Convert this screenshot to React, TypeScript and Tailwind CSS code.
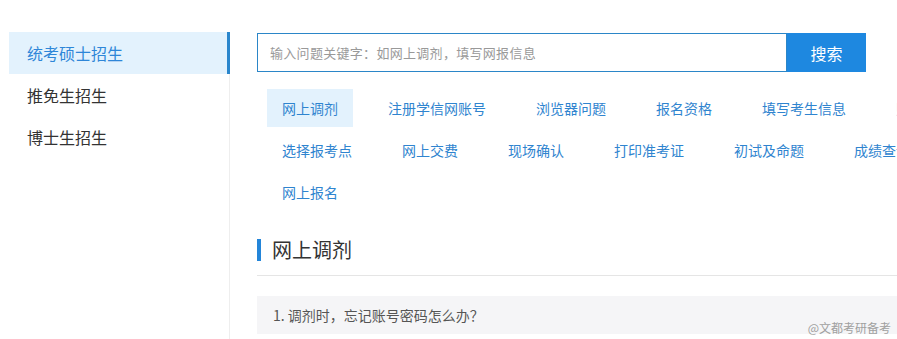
const side = ["统考硕士招生", "推免生招生", "博士生招生"];

const tags = [
  "网上调剂",
  "注册学信网账号",
  "浏览器问题",
  "报名资格",
  "填写考生信息",
  "照片采集",
  "选择报考点",
  "网上交费",
  "现场确认",
  "打印准考证",
  "初试及命题",
  "成绩查询",
  "网上报名",
];

export default function App() {
  return (
    <div
      className="relative h-[339px] w-full overflow-hidden bg-white"
      style={{ fontFamily: '"Noto Sans CJK SC", "Noto Sans", sans-serif' }}
    >
      <div className="flex pl-[9px] pt-[32px]">
        {/* sidebar */}
        <div className="h-[400px] w-[221px] shrink-0 border-r border-[#eeeeee]">
          {side.map((s, i) => (
            <div
              key={s}
              className={
                i === 0
                  ? "-mr-px flex h-[42px] items-center border-r-[3px] border-[#2a86cc] bg-[#e3f2fd] pl-[18px] text-[16px] text-[#2e86d8]"
                  : "flex h-[42px] items-center pl-[18px] text-[16px] text-[#333333]"
              }
            >
              {s}
            </div>
          ))}
        </div>

        {/* content */}
        <div className="ml-[27px] w-[740px] shrink-0">
          <div className="flex h-[40px] w-[609px] pt-px">
            <div className="flex flex-1 items-center border border-[#2b86c8] pl-[12px] text-[13px] tracking-[0.3px] text-[#999999]">
              输入问题关键字：如网上调剂，填写网报信息
            </div>
            <button className="w-[79px] bg-[#1e88e0] text-[16px] text-white">搜索</button>
          </div>

          <div className="mt-[17px] flex flex-wrap pl-[10px]">
            {tags.map((t, i) => (
              <span
                key={t}
                className={
                  i === 0
                    ? "mb-[4px] mr-[20px] h-[38px] bg-[#e3f2fd] px-[15px] text-[14px] leading-[38px] text-[#2f84cf]"
                    : "mb-[4px] mr-[20px] h-[38px] px-[15px] text-[14px] leading-[38px] text-[#2f84cf]"
                }
              >
                {t}
              </span>
            ))}
          </div>

          <div className="mt-[24px] flex items-center border-b border-[#e5e5e5] pb-[14px]">
            <span className="h-[22px] w-[4px] bg-[#2385d9]" />
            <span className="ml-[11px] text-[20px] leading-[22px] text-[#333333]">网上调剂</span>
          </div>

          <div className="mt-[20px] flex h-[38px] items-center bg-[#f5f5f7] pl-[16px] text-[14px] text-[#555555]">
            1. 调剂时，忘记账号密码怎么办？
          </div>
        </div>
      </div>

      {/* watermark */}
      <span className="absolute right-[6px] top-[319px] text-[12px] text-[#a0a0a0]">@文都考研备考</span>
    </div>
  );
}
